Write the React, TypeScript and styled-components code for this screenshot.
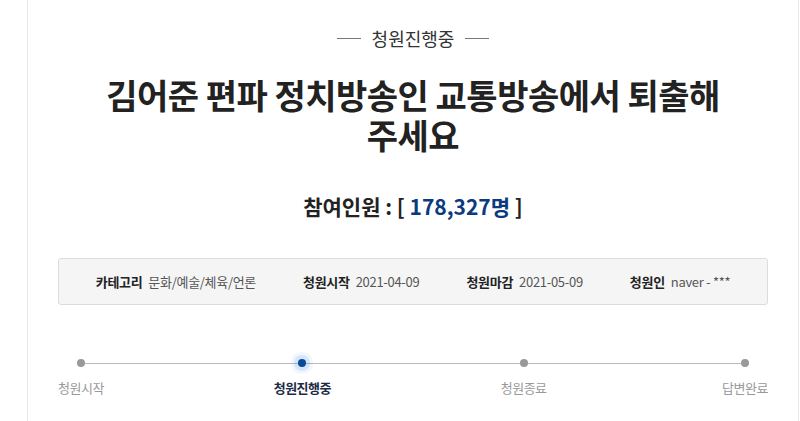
import { styled, createGlobalStyle } from 'styled-components';

const GlobalStyle = createGlobalStyle`
  body {
    margin: 0;
    background: #ffffff;
    font-family: "Noto Sans CJK KR", "Noto Sans", sans-serif;
    color: #222;
  }
`;

const STEPS = [
  { label: '청원시작', active: false },
  { label: '청원진행중', active: true },
  { label: '청원종료', active: false },
  { label: '답변완료', active: false }
];

const INFO = [
  { name: '카테고리', value: '문화/예술/체육/언론' },
  { name: '청원시작', value: '2021-04-09' },
  { name: '청원마감', value: '2021-05-09' },
  { name: '청원인', value: 'naver - ***' }
];

export default function App() {
  return (
    <>
      <GlobalStyle />
      <StyledPanel>
        <StyledStatus>청원진행중</StyledStatus>
        <StyledTitle>
          김어준 편파 정치방송인 교통방송에서 퇴출해
          <br />
          주세요
        </StyledTitle>
        <StyledCount>
          참여인원 : [ <span>178,327명</span> ]
        </StyledCount>
        <StyledInfo>
          {INFO.map(({ name, value }) => (
            <StyledInfoItem key={name}>
              <b>{name}</b>
              <span>{value}</span>
            </StyledInfoItem>
          ))}
        </StyledInfo>
        <StyledTrack>
          {STEPS.map(({ label, active }) => (
            <StyledStep key={label} $active={active}>
              <i />
              <span>{label}</span>
            </StyledStep>
          ))}
        </StyledTrack>
      </StyledPanel>
    </>
  );
}

const StyledPanel = styled.div`
  box-sizing: border-box;
  margin-left: 27px;
  width: 772px;
  min-height: 421px;
  padding-top: 25px;
  border-left: 1px solid #e6e6e6;
  border-right: 1px solid #e6e6e6;
  display: flex;
  flex-direction: column;
  align-items: center;
`;

const StyledStatus = styled.div`
  display: flex;
  align-items: center;
  gap: 11px;
  font-size: 18px;
  line-height: 26px;
  color: #333;
  &::before,
  &::after {
    content: '';
    width: 24px;
    height: 1px;
    background-color: #777;
  }
`;

const StyledTitle = styled.h1`
  margin: 24px 0 0;
  font-size: 34px;
  line-height: 40px;
  font-weight: 700;
  letter-spacing: -0.5px;
  text-align: center;
  color: #222;
`;

const StyledCount = styled.div`
  margin-top: 36px;
  font-size: 21px;
  line-height: 30px;
  font-weight: 700;
  color: #222;
  span {
    color: #0b3a7e;
  }
`;

const StyledInfo = styled.div`
  box-sizing: border-box;
  margin-top: 37px;
  width: 710px;
  height: 47px;
  display: flex;
  align-items: center;
  justify-content: center;
  gap: 47px;
  background-color: #f5f5f5;
  border: 1px solid #dcdcdc;
  border-radius: 3px;
`;

const StyledInfoItem = styled.div`
  display: flex;
  align-items: center;
  gap: 6px;
  font-size: 13px;
  letter-spacing: -0.3px;
  b {
    color: #222;
    font-weight: 700;
  }
  span {
    color: #555;
  }
`;

const StyledTrack = styled.div`
  position: relative;
  align-self: flex-start;
  margin: 54px 0 0 53px;
  width: 664px;
  display: flex;
  justify-content: space-between;
  &::before {
    content: '';
    position: absolute;
    left: 0;
    right: 0;
    top: 4px;
    height: 1px;
    background-color: #bbb;
  }
`;

const StyledStep = styled.div<{ $active: boolean }>`
  position: relative;
  width: 0;
  display: flex;
  flex-direction: column;
  align-items: center;
  gap: 11px;
  i {
    flex: none;
    width: 8px;
    height: 8px;
    border-radius: 50%;
    background-color: ${(props) => (props.$active ? '#0b4a9a' : '#999')};
    box-shadow: ${(props) =>
      props.$active
        ? '0 0 0 4px rgba(60, 140, 230, 0.16), 0 0 0 7px rgba(60, 140, 230, 0.07)'
        : 'none'};
  }
  span {
    white-space: nowrap;
    font-size: 13px;
    line-height: 20px;
    letter-spacing: -0.5px;
    font-weight: ${(props) => (props.$active ? 700 : 400)};
    color: ${(props) => (props.$active ? '#1d2b45' : '#999')};
  }
`;
